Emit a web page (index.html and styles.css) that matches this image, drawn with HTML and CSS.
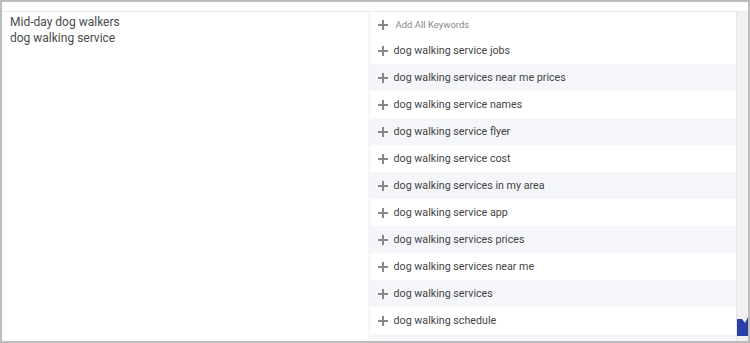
FILE: index.html
```html
<!DOCTYPE html>
<html lang="en">

<head>
    <meta charset="UTF-8">
    <meta name="viewport" content="width=device-width, initial-scale=1.0">
    <title>Keyword Suggestions</title>
    <link rel="stylesheet" href="styles.css">
</head>

<body>
    <div class="frame">
        <div class="top-strip"></div>
        <div class="main">
            <div class="ad-group">
                <div class="ad-line">Mid-day dog walkers</div>
                <div class="ad-line">dog walking service</div>
            </div>
            <div class="suggestions">
                <div class="add-all">
                    <span class="plus small"></span>
                    <span>Add All Keywords</span>
                </div>
                <div class="keyword"><span class="plus"></span>dog walking service jobs</div>
                <div class="keyword shaded"><span class="plus"></span>dog walking services near me prices</div>
                <div class="keyword"><span class="plus"></span>dog walking service names</div>
                <div class="keyword shaded"><span class="plus"></span>dog walking service flyer</div>
                <div class="keyword"><span class="plus"></span>dog walking service cost</div>
                <div class="keyword shaded"><span class="plus"></span>dog walking services in my area</div>
                <div class="keyword"><span class="plus"></span>dog walking service app</div>
                <div class="keyword shaded"><span class="plus"></span>dog walking services prices</div>
                <div class="keyword"><span class="plus"></span>dog walking services near me</div>
                <div class="keyword shaded"><span class="plus"></span>dog walking services</div>
                <div class="keyword"><span class="plus"></span>dog walking schedule</div>
                <div class="keyword shaded"></div>
            </div>
            <div class="scroll-track">
                <svg class="badge" width="11" height="20" viewBox="0 0 11 20">
                    <polygon points="0,3 5,3 8,7 11,1 11,20 0,20" fill="#2b3fa8" />
                </svg>
            </div>
        </div>
    </div>
</body>

</html>
```

FILE: styles.css
```css
body {
    margin: 0;
    font-family: Roboto, 'Liberation Sans', Arial, sans-serif;
    background-color: #fff;
}

.frame {
    width: 750px;
    height: 343px;
    box-sizing: border-box;
    border: 2px solid #bdbdbd;
    display: flex;
    flex-direction: column;
    overflow: hidden;
}

.top-strip {
    height: 9px;
    border-bottom: 1px solid #ececec;
    flex-shrink: 0;
}

.main {
    flex: 1;
    display: flex;
    overflow: hidden;
}

.ad-group {
    width: 368px;
    box-sizing: border-box;
    padding: 2px 8px 0;
    font-size: 12px;
    color: #4a4a4a;
}

.ad-line {
    line-height: 16px;
}

.suggestions {
    width: 367px;
    background-color: #fff;
    box-shadow: -1px 0 2px rgba(0, 0, 0, 0.08);
    overflow: hidden;
}

.add-all {
    height: 25px;
    display: flex;
    align-items: center;
    padding-left: 8px;
    font-size: 9.5px;
    color: #8a8a8a;
}

.keyword {
    height: 27px;
    display: flex;
    align-items: center;
    padding-left: 8px;
    font-size: 10.7px;
    color: #444;
}

.shaded {
    background-color: #f5f6fa;
}

.plus {
    position: relative;
    width: 10px;
    height: 10px;
    margin-right: 6px;
    flex-shrink: 0;
}

.plus::before,
.plus::after {
    content: "";
    position: absolute;
    background-color: #888;
}

.plus::before {
    left: 0;
    top: 4px;
    width: 10px;
    height: 2px;
}

.plus::after {
    left: 4px;
    top: 0;
    width: 2px;
    height: 10px;
}

.plus.small {
    margin-right: 8px;
}

.scroll-track {
    flex: 1;
    background-color: #f1f1f3;
    border-left: 1px solid #e6e6ea;
    display: flex;
    flex-direction: column;
    justify-content: flex-end;
    padding-bottom: 5px;
}

.badge {
    display: block;
}
```
